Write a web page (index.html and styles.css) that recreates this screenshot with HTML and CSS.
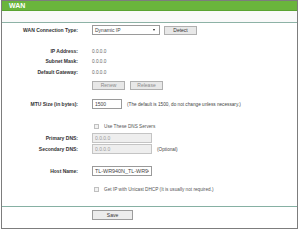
FILE: index.html
```html
<!DOCTYPE html>
<html lang="en">
<head>
    <meta charset="UTF-8"/>
    <title>WAN</title>
    <link rel="stylesheet" href="styles.css">
</head>
<body>
<div class="panel">
    <div class="title">WAN</div>
    <div class="subbar"></div>

    <div class="row first">
        <span class="label">WAN Connection Type:</span>
        <div class="field">
            <div class="select"><span>Dynamic IP</span><i class="arrow"></i></div>
            <button class="btn detect">Detect</button>
        </div>
    </div>

    <div class="row gap11">
        <span class="label">IP Address:</span>
        <div class="field value">0.0.0.0</div>
    </div>
    <div class="row">
        <span class="label">Subnet Mask:</span>
        <div class="field value">0.0.0.0</div>
    </div>
    <div class="row gap1">
        <span class="label">Default Gateway:</span>
        <div class="field value">0.0.0.0</div>
    </div>
    <div class="row gap3">
        <span class="label"></span>
        <div class="field">
            <button class="btn off">Renew</button>
            <button class="btn off release">Release</button>
        </div>
    </div>

    <div class="row gap9">
        <span class="label">MTU Size (in bytes):</span>
        <div class="field">
            <input class="text mtu" type="text" value="1500"/>
            <span class="note">(The default is 1500, do not change unless necessary.)</span>
        </div>
    </div>

    <div class="row gap12">
        <span class="label"></span>
        <div class="field">
            <span class="check"></span>
            <span class="note-check">Use These DNS Servers</span>
        </div>
    </div>
    <div class="row gap2">
        <span class="label">Primary DNS:</span>
        <div class="field">
            <input class="text wide" disabled type="text" value="0.0.0.0"/>
        </div>
    </div>
    <div class="row gap1">
        <span class="label">Secondary DNS:</span>
        <div class="field">
            <input class="text wide" disabled type="text" value="0.0.0.0"/>
            <span class="note">(Optional)</span>
        </div>
    </div>

    <div class="row gap12">
        <span class="label">Host Name:</span>
        <div class="field">
            <input class="text wide host" type="text" value="TL-WR940N_TL-WR941ND"/>
        </div>
    </div>
    <div class="row gap8">
        <span class="label"></span>
        <div class="field">
            <span class="check"></span>
            <span class="note-check">Get IP with Unicast DHCP (It is usually not required.)</span>
        </div>
    </div>

    <div class="line"></div>

    <div class="row gap3">
        <span class="label"></span>
        <div class="field">
            <button class="btn save">Save</button>
        </div>
    </div>
</div>
</body>
</html>
```

FILE: styles.css
```css
body {
    margin: 0;
    background: #fff;
    font-family: "Liberation Sans", Arial, sans-serif;
    font-size: 5px;
    color: #333;
}

.panel {
    box-sizing: border-box;
    width: 297px;
    height: 229px;
    margin-left: 1px;
    border: 1px solid #7d7d7d;
    background: #fff;
}

.title {
    height: 10px;
    line-height: 10px;
    padding-left: 7px;
    background: #6ab53c;
    border-bottom: 1px solid #5aa332;
    box-sizing: border-box;
    color: #fff;
    font-weight: bold;
    font-size: 7px;
}

.subbar {
    height: 11px;
    background: #f9f9f9;
    border-bottom: 1px solid #8db2a6;
}

.row {
    display: flex;
    align-items: center;
    height: 10px;
}

.first { margin-top: 2px; }
.gap1 { margin-top: 1px; }
.gap2 { margin-top: 2px; }
.gap3 { margin-top: 3px; }
.gap8 { margin-top: 8px; }
.gap9 { margin-top: 9px; }
.gap11 { margin-top: 11px; }
.gap12 { margin-top: 12px; }

.label {
    width: 76px;
    text-align: right;
    font-weight: bold;
    color: #333;
    white-space: nowrap;
}

.field {
    margin-left: 14px;
    display: flex;
    align-items: center;
    white-space: nowrap;
}

.value {
    color: #666;
    font-size: 4.7px;
}

.select {
    box-sizing: border-box;
    width: 68px;
    height: 10px;
    border: 1px solid #9a9a9a;
    background: #fff;
    display: flex;
    align-items: center;
    justify-content: space-between;
    padding: 0 4px 0 2px;
    color: #444;
}

.arrow {
    width: 0;
    height: 0;
    border-left: 1.5px solid transparent;
    border-right: 1.5px solid transparent;
    border-top: 2px solid #222;
}

.btn {
    box-sizing: border-box;
    width: 33px;
    height: 9px;
    padding: 0;
    border: 1px solid #b0b0b0;
    background: #e8e8e8;
    font-family: inherit;
    font-size: 5px;
    color: #333;
}

.detect { margin-left: 4px; }
.off { color: #8a8a8a; }
.release { margin-left: 5px; }
.save { width: 41px; height: 10px; border-color: #9c9c9c; background: #ececec; }

.text {
    box-sizing: border-box;
    height: 10px;
    padding: 0 2px;
    margin: 0;
    border: 1px solid #9a9a9a;
    background: #fff;
    font-family: inherit;
    font-size: 5px;
    color: #444;
}

.text:disabled {
    background: #eeeeee;
    border-color: #c4c4c4;
    color: #9a9a9a;
}

.mtu { width: 30px; }
.wide { width: 60px; }
.host { font-size: 5.4px; }

.note {
    margin-left: 5px;
    color: #444;
    font-size: 4.7px;
}

.check {
    box-sizing: border-box;
    width: 5px;
    height: 5px;
    margin-left: 2px;
    border: 1px solid #c0c0c0;
    background: #f2f2f2;
}

.note-check {
    margin-left: 5px;
    color: #555;
    font-size: 4.7px;
}

.line {
    margin-top: 12px;
    height: 1px;
    background: #86b0a3;
}
```
